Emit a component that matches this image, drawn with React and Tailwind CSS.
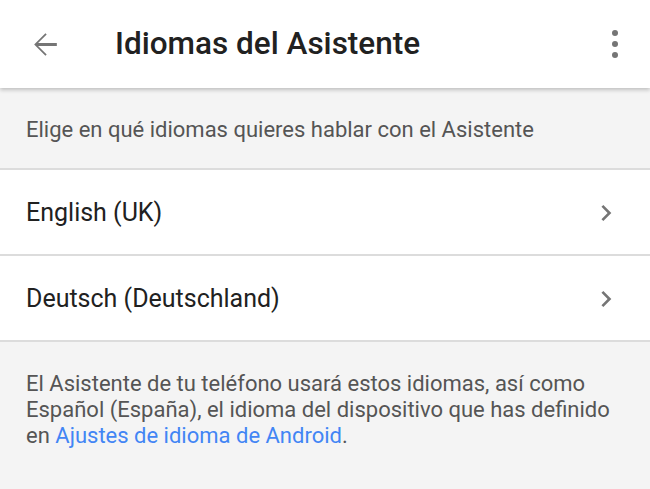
const font = { fontFamily: 'Roboto, "Noto Sans", sans-serif' };

const Chevron = () => (
    <svg width="32" height="32" viewBox="0 0 24 24" className="text-[#757575]">
        <path d="M8.6 16.6L13.2 12 8.6 7.4 10 6l6 6-6 6z" fill="currentColor" />
    </svg>
);

const LanguageRow = ({ label }) => (
    <div className="flex items-center justify-between h-[86px] pl-[26px] pr-[28px] pt-[2px] bg-white border-b-2 border-[#dcdcdc]">
        <span className="text-[25px] text-[#212121]">{label}</span>
        <Chevron />
    </div>
);

export default function App() {
    return (
        <div className="w-[650px] h-[489px] bg-[#f4f4f4] overflow-hidden" style={font}>
            {/* header */}
            <div className="relative z-10 flex items-center h-[88px] bg-white shadow-[0_2px_4px_rgba(0,0,0,0.22)]">
                <button className="w-[115px] flex items-center pl-[26px] text-[#757575]">
                    <svg width="37" height="37" viewBox="0 0 24 24">
                        <path d="M20 11.1H7.83l5.59-5.59L12.6 4.7 5.3 12l7.3 7.3.82-.82L7.83 12.9H20v-1.8z" fill="currentColor" />
                    </svg>
                </button>
                <h1 className="text-[31.5px] font-medium text-[#212121]">Idiomas del Asistente</h1>
                <div className="ml-auto mr-[32px] flex flex-col gap-[5px] items-center">
                    <span className="w-[6px] h-[6px] rounded-full bg-[#757575]" />
                    <span className="w-[6px] h-[6px] rounded-full bg-[#757575]" />
                    <span className="w-[6px] h-[6px] rounded-full bg-[#757575]" />
                </div>
            </div>

            {/* intro */}
            <div className="h-[82px] flex items-center pl-[26px] pt-[2px] border-b-2 border-[#dcdcdc]">
                <p className="text-[22px] text-[#555555]">Elige en qué idiomas quieres hablar con el Asistente</p>
            </div>

            <LanguageRow label="English (UK)" />
            <LanguageRow label="Deutsch (Deutschland)" />

            {/* footer note */}
            <p className="pt-[29px] pl-[26px] pr-[26px] text-[22px] leading-[26px] text-[#555555]">
                El Asistente de tu teléfono usará estos idiomas, así como Español (España), el idioma del dispositivo que has definido en{' '}
                <a className="text-[#4285f4]">Ajustes de idioma de Android</a>.
            </p>
        </div>
    );
}
